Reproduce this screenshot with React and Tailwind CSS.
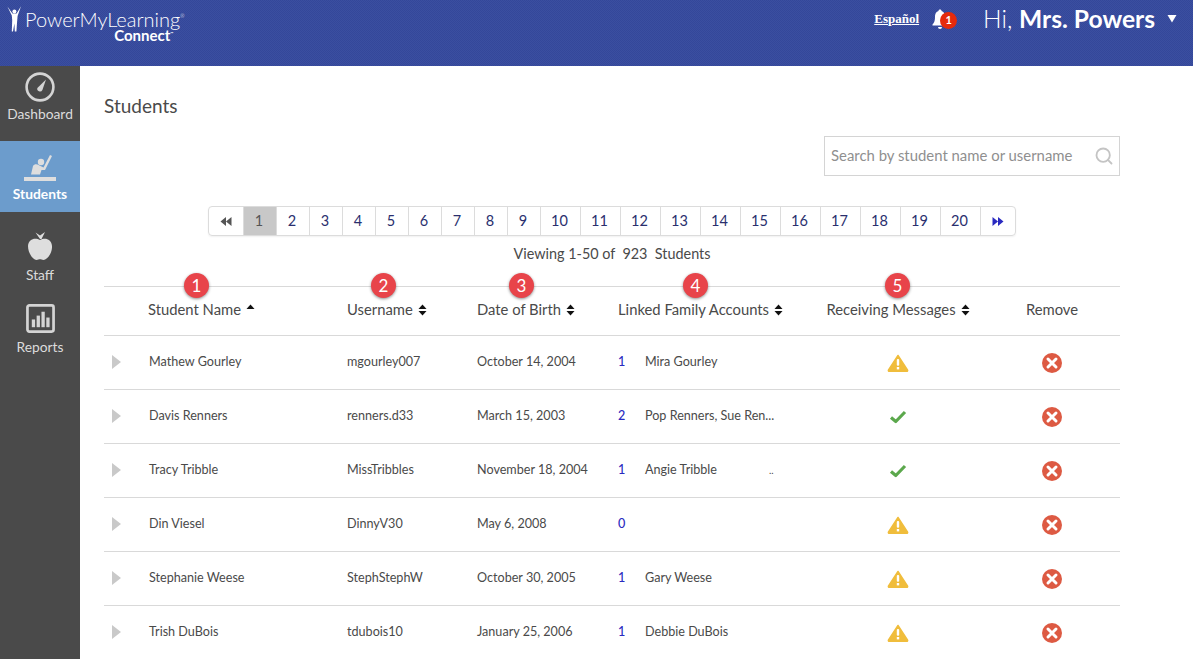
import { Search } from "lucide-react";

const pages = [1, 2, 3, 4, 5, 6, 7, 8, 9, 10, 11, 12, 13, 14, 15, 16, 17, 18, 19, 20];

const students = [
  { name: "Mathew Gourley", username: "mgourley007", dob: "October 14, 2004", count: 1, family: "Mira Gourley", status: "warn" },
  { name: "Davis Renners", username: "renners.d33", dob: "March 15, 2003", count: 2, family: "Pop Renners, Sue Ren...", status: "ok" },
  { name: "Tracy Tribble", username: "MissTribbles", dob: "November 18, 2004", count: 1, family: "Angie Tribble", status: "ok", dots: true },
  { name: "Din Viesel", username: "DinnyV30", dob: "May 6, 2008", count: 0, family: "", status: "warn" },
  { name: "Stephanie Weese", username: "StephStephW", dob: "October 30, 2005", count: 1, family: "Gary Weese", status: "warn" },
  { name: "Trish DuBois", username: "tdubois10", dob: "January 25, 2006", count: 1, family: "Debbie DuBois", status: "warn" },
];

const columns = "grid grid-cols-[243px_130px_141px_180px_200px_108px] items-center";

function SortArrows({ up }) {
  return (
    <svg width="9" height="12" viewBox="0 0 9 12" className="ml-[5px] shrink-0" fill="#111">
      <path d="M4.5 0.5 L8.5 5 H0.5 Z" />
      {!up && <path d="M4.5 11.5 L8.5 7 H0.5 Z" />}
    </svg>
  );
}

function Badge({ n, left }) {
  return (
    <div
      className="absolute top-[-14px] w-[25px] h-[25px] rounded-full bg-[#e8444a] text-white flex items-center justify-center text-[17px] shadow-[0_1px_3px_rgba(0,0,0,0.45)]"
      style={{ left }}
    >
      {n}
    </div>
  );
}

function WarnIcon() {
  return (
    <svg width="22" height="18" viewBox="0 0 22 18">
      <path d="M11 1.5 L20.6 16.2 Q20.8 17.2 19.8 17.2 H2.2 Q1.2 17.2 1.4 16.2 Z" fill="#f0bd3c" stroke="#f0bd3c" strokeWidth="1.5" strokeLinejoin="round" />
      <rect x="9.8" y="5" width="2.4" height="6.8" rx="1" fill="#fff" />
      <rect x="9.8" y="13" width="2.4" height="2.4" fill="#fff" />
    </svg>
  );
}

function CheckIcon() {
  return (
    <svg width="18" height="14" viewBox="0 0 18 14">
      <path d="M2 7.5 L6.8 11.5 L16 2" fill="none" stroke="#5ba84c" strokeWidth="3.2" strokeLinejoin="round" />
    </svg>
  );
}

function RemoveIcon() {
  return (
    <svg width="20" height="20" viewBox="0 0 20 20">
      <circle cx="10" cy="10" r="10" fill="#dd5a43" />
      <path d="M6 6 L14 14 M14 6 L6 14" stroke="#fff" strokeWidth="3" strokeLinecap="round" />
    </svg>
  );
}

function NavItem({ label, active, className, children }) {
  return (
    <div className={"flex flex-col items-center " + (active ? "bg-[#6c9ccc] text-white font-bold " : "text-[#dcdcdc] ") + className}>
      {children}
      <span className="text-[13.8px] leading-4">{label}</span>
    </div>
  );
}

export default function App() {
  return (
    <div className="w-[1193px] h-[659px] overflow-hidden bg-white text-[#4a4a4a] font-['Lato',sans-serif]">
      <header className="h-[66px] bg-[repeating-conic-gradient(#3b4fa0_0_25%,#34479a_0_50%)] bg-[length:2px_2px] flex justify-between text-white">
        <div className="flex pl-[7px] pt-[6px]">
          <svg width="15" height="26" viewBox="0 0 15 26" fill="#fff">
            <circle cx="7.4" cy="5.6" r="2" />
            <path d="M0.4 0.5 L5.4 7.4 H9.6 L14 0.2 L10.6 10 L10 17 L9.4 25.5 H7.8 L7.4 17.5 L6 25.5 H4.8 L5.2 14 L4.8 9.6 Z" />
          </svg>
          <div className="ml-[3px] flex flex-col items-end">
            <div className="text-[20px] leading-[20px] font-light mt-[3px] whitespace-nowrap">
              PowerMyLearning<span className="text-[5px] leading-none relative top-[-9px]">®</span>
            </div>
            <div className="text-[15px] leading-[12px] font-bold mr-[11px]">
              Connect<span className="text-[4px] leading-none relative top-[-6px]">™</span>
            </div>
          </div>
        </div>
        <div className="flex items-start">
          <a className="font-['Liberation_Serif',serif] font-bold text-[13px] underline mt-[11px] leading-4">Español</a>
          <div className="relative ml-[13px] mt-[8px] w-[25px]">
            <svg width="16" height="22" viewBox="0 0 16 22" fill="#fff">
              <path d="M8 1.5 C9 1.5 9.5 2 9.5 3 C12.5 4 13 6.5 13 9.5 C13 13 14 15 15.5 16.5 V17.5 H0.5 V16.5 C2 15 3 13 3 9.5 C3 6.5 3.5 4 6.5 3 C6.5 2 7 1.5 8 1.5 Z" />
              <path d="M6 19 H10 A2 2 0 0 1 6 19 Z" />
            </svg>
            <div className="absolute left-[8px] top-[4px] w-[17px] h-[17px] rounded-full bg-[#e52a0c] text-[11px] font-bold flex items-center justify-center">1</div>
          </div>
          <div className="ml-[26px] mt-[3px] text-[24.6px] leading-8 font-light">
            Hi, <span className="font-bold">Mrs. Powers</span>
          </div>
          <svg width="10" height="9" viewBox="0 0 10 9" fill="#fff" className="ml-[12px] mt-[14px] mr-[16px]">
            <path d="M0.5 1 H9.5 L5 8.5 Z" />
          </svg>
        </div>
      </header>

      <div className="flex h-[593px]">
        <nav className="w-[80px] bg-[#4a4a4a] flex flex-col">
          <NavItem label="Dashboard" className="h-[75px] pt-[6px]">
            <svg width="30" height="30" viewBox="0 0 30 30" className="mb-[4px]">
              <circle cx="15" cy="15" r="13.4" fill="none" stroke="#d4d4d4" strokeWidth="2.6" />
              <path d="M21 7.5 L17.4 18 A2.7 2.7 0 0 1 12.4 16 Z" fill="#d4d4d4" />
            </svg>
          </NavItem>
          <NavItem label="Students" active className="h-[71px] pt-[14px]">
            <svg width="32" height="26" viewBox="0 0 32 26" className="mb-[5px]">
              <rect x="0" y="22" width="32" height="4" fill="#dedede" />
              <path d="M26 0 L28 1 L21 15 H17.5 L16 19.5 H7 L9 11 C10 9 13 9 14.5 10 L19.5 12.5 Z" fill="#dedede" />
              <circle cx="17" cy="7" r="3.2" fill="#dedede" />
            </svg>
          </NavItem>
          <NavItem label="Staff" className="h-[71px] pt-[20px]">
            <svg width="24" height="28" viewBox="0 0 24 28" className="mb-[7px]">
              <path d="M12 8 C16 5.5 23.5 6 24 14 C24.5 21 19 28 15.5 28 C14 28 13 27.3 12 27.3 C11 27.3 10 28 8.5 28 C5 28 0 21 0 14 C0.5 6 8 5.5 12 8 Z" fill="#dedede" />
              <path d="M12 7 L7.5 0.5 L12 3.5 L17 0 L13.5 7 Z" fill="#dedede" />
            </svg>
          </NavItem>
          <NavItem label="Reports" className="h-[72px] pt-[21px]">
            <svg width="29" height="29" viewBox="0 0 30 30" className="mb-[6px]">
              <rect x="1.5" y="1.5" width="27" height="27" rx="2" fill="none" stroke="#d4d4d4" strokeWidth="2.8" />
              <rect x="6" y="16" width="3.4" height="8" fill="#d4d4d4" />
              <rect x="11" y="12" width="3.4" height="12" fill="#d4d4d4" />
              <rect x="16" y="8" width="3.4" height="16" fill="#d4d4d4" />
              <rect x="21" y="14" width="3.4" height="10" fill="#d4d4d4" />
            </svg>
          </NavItem>
        </nav>

        <main className="w-[1016px] ml-[24px]">
          <h1 className="text-[19px] leading-6 mt-[28px]">Students</h1>

          <div className="flex justify-end mt-[18px]">
            <div className="w-[296px] h-[40px] border border-[#d4d4d4] flex items-center justify-between pl-[6px] pr-[5px]">
              <span className="text-[14.9px] text-[#8f8f8f] pb-[2px]">Search by student name or username</span>
              <Search size={20} color="#c4c4c4" strokeWidth={2.2} />
            </div>
          </div>

          <div className="ml-[104px] mt-[30px] w-[808px] h-[30px] flex border border-[#dcdcdc] rounded-[4px] text-[14.5px] text-[#2a2f6e] shadow-[0_1px_2px_rgba(0,0,0,0.06)]">
            <div className="w-[35px] flex items-center justify-center border-r border-[#dcdcdc]">
              <svg width="12" height="9" viewBox="0 0 12 9" fill="#555"><path d="M6 0 V9 L0.5 4.5 Z M11.5 0 V9 L6 4.5 Z" /></svg>
            </div>
            {pages.map((p) => (
              <div
                key={p}
                className={
                  (p < 10 ? "w-[33px] " : "w-[40px] ") +
                  "flex items-center justify-center pr-[2px] border-r border-[#dcdcdc] " +
                  (p === 1 ? "bg-[#c8c8c8] text-[#555]" : "")
                }
              >
                {p}
              </div>
            ))}
            <div className="flex-1 flex items-center justify-center">
              <svg width="12" height="9" viewBox="0 0 12 9" fill="#2a2ac0"><path d="M0.5 0 V9 L6 4.5 Z M6 0 V9 L11.5 4.5 Z" /></svg>
            </div>
          </div>

          <p className="text-center text-[14.4px] leading-5 mt-[8px] whitespace-pre">Viewing 1-50 of  923  Students</p>

          <div className="mt-[22px] border-t border-[#d9d9d9]">
            <div className={columns + " relative h-[49px] pb-[3px] border-b border-[#d9d9d9] text-[14.8px]"}>
              <Badge n={1} left="80px" />
              <Badge n={2} left="267px" />
              <Badge n={3} left="405px" />
              <Badge n={4} left="579px" />
              <Badge n={5} left="781px" />
              <div className="pl-[44px] flex items-center">Student Name<SortArrows up /></div>
              <div className="flex items-center">Username<SortArrows /></div>
              <div className="flex items-center">Date of Birth<SortArrows /></div>
              <div className="flex items-center whitespace-nowrap">Linked Family Accounts<SortArrows /></div>
              <div className="flex items-center justify-center whitespace-nowrap">Receiving Messages<SortArrows /></div>
              <div className="text-center">Remove</div>
            </div>

            {students.map((s) => (
              <div key={s.name} className={columns + " h-[54px] border-b border-[#d9d9d9] text-[12.6px]"}>
                <div className="flex items-center pl-[8px]">
                  <svg width="9" height="14" viewBox="0 0 9 14" fill="#c9c9c9" className="mr-[28px]"><path d="M0 0 L9 7 L0 14 Z" /></svg>
                  {s.name}
                </div>
                <div>{s.username}</div>
                <div>{s.dob}</div>
                <div className="flex items-center relative">
                  <span className="w-[27px] text-[#2a2ac0] font-medium">{s.count}</span>
                  <span className="whitespace-nowrap">{s.family}</span>
                  {s.dots && <span className="absolute left-[151px] text-[10px]">..</span>}
                </div>
                <div className="flex justify-center">{s.status === "warn" ? <WarnIcon /> : <CheckIcon />}</div>
                <div className="flex justify-center"><RemoveIcon /></div>
              </div>
            ))}
          </div>
        </main>
      </div>
    </div>
  );
}
